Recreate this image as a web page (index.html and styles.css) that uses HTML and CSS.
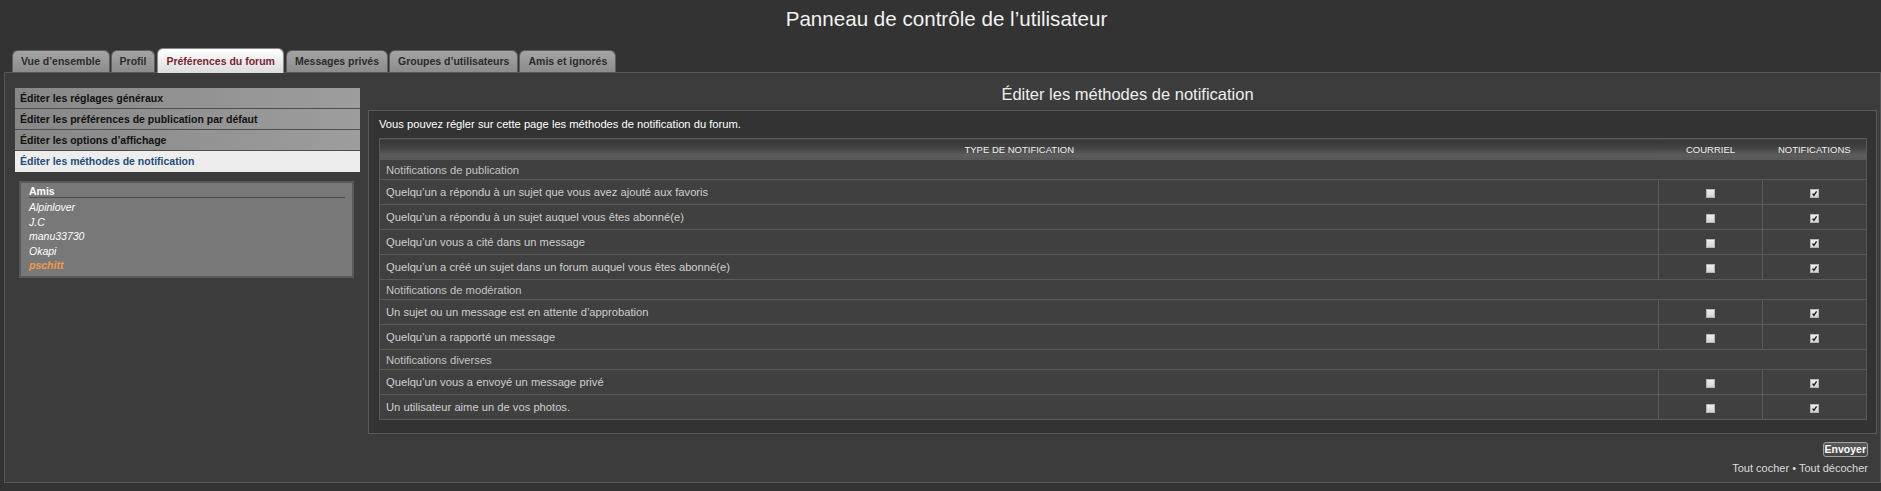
FILE: index.html
```html
<!DOCTYPE html>
<html lang="fr">
<head>
<meta charset="utf-8">
<title>Panneau de contrôle de l’utilisateur</title>
<link rel="stylesheet" href="styles.css">
</head>
<body>
<h1 class="page-title">Panneau de contrôle de l’utilisateur</h1>
<nav class="tabs">
  <a class="tab">Vue d’ensemble</a>
  <a class="tab">Profil</a>
  <a class="tab active">Préférences du forum</a>
  <a class="tab">Messages privés</a>
  <a class="tab">Groupes d’utilisateurs</a>
  <a class="tab">Amis et ignorés</a>
</nav>
<div class="panel">
  <aside class="sidebar">
    <ul class="menu">
      <li>Éditer les réglages généraux</li>
      <li>Éditer les préférences de publication par défaut</li>
      <li>Éditer les options d’affichage</li>
      <li class="current">Éditer les méthodes de notification</li>
    </ul>
    <div class="friends">
      <div class="friends-title">Amis</div>
      <ul class="friends-list">
        <li>Alpinlover</li>
        <li>J.C</li>
        <li>manu33730</li>
        <li>Okapi</li>
        <li class="online">pschitt</li>
      </ul>
    </div>
  </aside>
  <main class="content">
    <h2 class="content-title">Éditer les méthodes de notification</h2>
    <div class="box">
      <p class="intro">Vous pouvez régler sur cette page les méthodes de notification du forum.</p>
      <table class="notif">
        <colgroup><col><col class="narrow"><col class="narrow"></colgroup>
        <thead>
          <tr><th>TYPE DE NOTIFICATION</th><th>COURRIEL</th><th>NOTIFICATIONS</th></tr>
        </thead>
        <tbody>
          <tr class="section"><td colspan="3">Notifications de publication</td></tr>
          <tr><td>Quelqu’un a répondu à un sujet que vous avez ajouté aux favoris</td><td class="mark"><span class="cb"></span></td><td class="mark"><span class="cb on"><svg viewBox="0 0 9 9"><path d="M2 4.6 L3.8 6.8 L7.2 1.8"/></svg></span></td></tr>
          <tr><td>Quelqu’un a répondu à un sujet auquel vous êtes abonné(e)</td><td class="mark"><span class="cb"></span></td><td class="mark"><span class="cb on"><svg viewBox="0 0 9 9"><path d="M2 4.6 L3.8 6.8 L7.2 1.8"/></svg></span></td></tr>
          <tr><td>Quelqu’un vous a cité dans un message</td><td class="mark"><span class="cb"></span></td><td class="mark"><span class="cb on"><svg viewBox="0 0 9 9"><path d="M2 4.6 L3.8 6.8 L7.2 1.8"/></svg></span></td></tr>
          <tr><td>Quelqu’un a créé un sujet dans un forum auquel vous êtes abonné(e)</td><td class="mark"><span class="cb"></span></td><td class="mark"><span class="cb on"><svg viewBox="0 0 9 9"><path d="M2 4.6 L3.8 6.8 L7.2 1.8"/></svg></span></td></tr>
          <tr class="section"><td colspan="3">Notifications de modération</td></tr>
          <tr><td>Un sujet ou un message est en attente d’approbation</td><td class="mark"><span class="cb"></span></td><td class="mark"><span class="cb on"><svg viewBox="0 0 9 9"><path d="M2 4.6 L3.8 6.8 L7.2 1.8"/></svg></span></td></tr>
          <tr><td>Quelqu’un a rapporté un message</td><td class="mark"><span class="cb"></span></td><td class="mark"><span class="cb on"><svg viewBox="0 0 9 9"><path d="M2 4.6 L3.8 6.8 L7.2 1.8"/></svg></span></td></tr>
          <tr class="section"><td colspan="3">Notifications diverses</td></tr>
          <tr><td>Quelqu’un vous a envoyé un message privé</td><td class="mark"><span class="cb"></span></td><td class="mark"><span class="cb on"><svg viewBox="0 0 9 9"><path d="M2 4.6 L3.8 6.8 L7.2 1.8"/></svg></span></td></tr>
          <tr><td>Un utilisateur aime un de vos photos.</td><td class="mark"><span class="cb"></span></td><td class="mark"><span class="cb on"><svg viewBox="0 0 9 9"><path d="M2 4.6 L3.8 6.8 L7.2 1.8"/></svg></span></td></tr>
        </tbody>
      </table>
    </div>
    <div class="actions">
      <button class="submit" type="button">Envoyer</button>
      <div class="marks"><a>Tout cocher</a> • <a>Tout décocher</a></div>
    </div>
  </main>
</div>
</body>
</html>
```
FILE: styles.css
```css
* { box-sizing: border-box; }

html, body {
  margin: 0;
  padding: 0;
  background: #333333;
  font-family: "Liberation Sans", Arial, sans-serif;
  color: #cccccc;
}

.page-title {
  margin: 0;
  padding: 7px 0 0 12px;
  font-size: 20.6px;
  line-height: 24px;
  font-weight: normal;
  text-align: center;
  color: #f2f2f2;
}

.tabs {
  display: flex;
  align-items: flex-end;
  height: 24px;
  margin-top: 17px;
  padding-left: 12px;
  position: relative;
  z-index: 2;
}

.tab {
  display: block;
  margin-right: 1px;
  padding: 0 8px;
  border: 1px solid #5e5e5e;
  border-bottom: none;
  border-radius: 6px 6px 0 0;
  background: linear-gradient(to bottom, #a4a4a4, #8c8c8c);
  color: #2b2b2b;
  font-size: 10.5px;
  font-weight: bold;
  line-height: 21px;
  white-space: nowrap;
}

.tab.active {
  margin: 0 2px -1px 1px;
  padding-top: 2px;
  padding-bottom: 1px;
  background: linear-gradient(to bottom, #ffffff, #dcdcdc);
  color: #7a2333;
  border-color: #8a8a8a;
}

.panel {
  display: flex;
  align-items: flex-start;
  margin-left: 4px;
  padding: 10px 3px 0 10px;
  border: 1px solid #575757;
  background: #3c3c3c;
}

.sidebar {
  flex: 0 0 345px;
  margin-top: 5px;
}

.menu {
  list-style: none;
  margin: 0;
  padding: 0;
}

.menu li {
  height: 21px;
  padding-left: 5px;
  border-bottom: 1px solid #4e4e4e;
  background: linear-gradient(to right, #878787, #9d9d9d);
  color: #111111;
  font-size: 10.5px;
  font-weight: bold;
  line-height: 20px;
}

.menu li.current {
  background: #ededed;
  color: #1d4d78;
  border-bottom-color: #ededed;
}

.friends {
  margin: 9px 6px 0 4px;
  padding: 2px 7px 3px 8px;
  border: 2px solid #595959;
  background: #787878;
}

.friends-title {
  font-size: 10.5px;
  font-weight: bold;
  line-height: 12px;
  color: #ffffff;
  border-bottom: 1px solid #4a4a4a;
}

.friends-list {
  list-style: none;
  margin: 0;
  padding: 2px 0 0;
}

.friends-list li {
  font-size: 10.5px;
  font-style: italic;
  line-height: 14.5px;
  color: #ffffff;
}

.friends-list li.online {
  color: #f39a4c;
  font-weight: bold;
}

.content {
  flex: 1;
  margin-left: 8px;
}

.content-title {
  margin: 0 0 5px;
  padding-left: 10px;
  font-size: 16.5px;
  font-weight: normal;
  line-height: 22px;
  text-align: center;
  color: #eeeeee;
}

.box {
  padding: 6px 9px 13px 10px;
  border: 1px solid #5a5a5a;
  background: #333333;
}

.intro {
  margin: 0 0 7px;
  font-size: 11.2px;
  line-height: 14px;
  color: #ffffff;
}

.notif {
  width: 100%;
  border-collapse: collapse;
  border: 1px solid #5a5a5a;
  font-size: 11.2px;
}

.notif col.narrow { width: 104px; }

.notif th {
  height: 21px;
  padding: 0;
  font-size: 9.5px;
  font-weight: normal;
  color: #f0f0f0;
  text-align: center;
  background: linear-gradient(to bottom, #363636 0%, #424242 40%, #5e5e5e 80%, #555555 100%);
}

.notif td {
  height: 25px;
  padding: 0 6px;
  border-top: 1px solid #5a5a5a;
  background: #404040;
  color: #cfcfcf;
}

.notif td.mark {
  border-left: 1px solid #5a5a5a;
  text-align: center;
  padding: 0;
}

.notif tr.section td {
  height: 20px;
  color: #c4c4c4;
}

.cb {
  display: inline-block;
  width: 9px;
  height: 9px;
  vertical-align: middle;
  border: 1px solid #b4b4b4;
  background: linear-gradient(to bottom, #eeeeee, #d4d4d4);
}

.cb svg {
  display: block;
  width: 7px;
  height: 7px;
  fill: none;
  stroke: #1e1e1e;
  stroke-width: 1.8;
}

.actions {
  display: flex;
  flex-direction: column;
  align-items: flex-end;
  padding: 8px 9px 7px 0;
}

.submit {
  display: block;
  height: 15px;
  margin: 0;
  padding: 0 1px;
  border: 1px solid #a0a0a0;
  border-radius: 3px;
  background: linear-gradient(to bottom, #5a5a5a, #454545);
  color: #ffffff;
  font-family: inherit;
  font-size: 10.5px;
  font-weight: bold;
  line-height: 13px;
}

.marks {
  margin-top: 4px;
  font-size: 11px;
  line-height: 14px;
  color: #dddddd;
}
```
